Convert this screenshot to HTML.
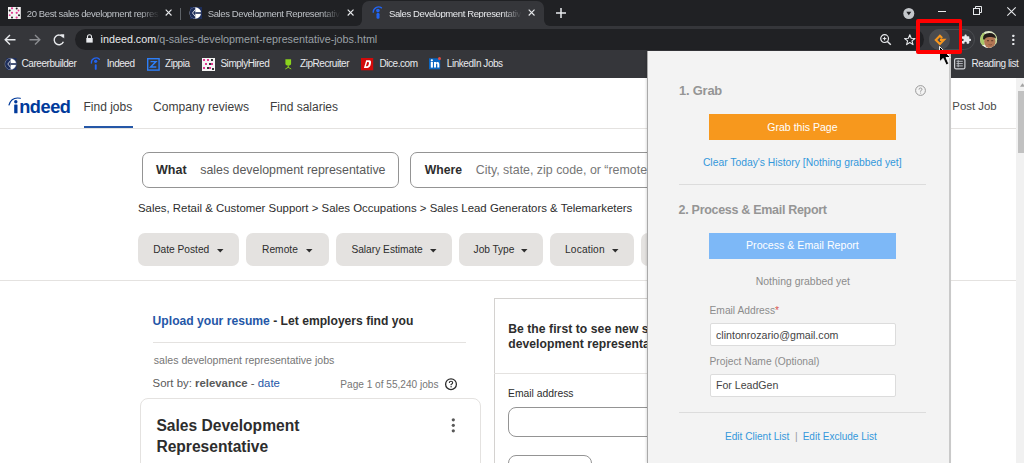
<!DOCTYPE html>
<html><head><meta charset="utf-8"><style>
html,body{margin:0;padding:0;width:1024px;height:463px;overflow:hidden;background:#fff;}
body{position:relative;font-family:"Liberation Sans",sans-serif;}
.t{position:absolute;white-space:nowrap;line-height:1;}
.r{position:absolute;box-sizing:border-box;}
svg{position:absolute;overflow:visible;}
</style></head><body>
<div class="r" style="left:0px;top:78px;width:1024px;height:385px;background:#ffffff;"></div>
<svg style="left:0px;top:90px" width="80" height="30"><path d="M9 15Q11.5 6.6 20.3 8.3" fill="none" stroke="#003a9b" stroke-width="1.15" stroke-linecap="round"/><circle cx="15.8" cy="11.7" r="1.7" fill="#003a9b"/><rect x="14.2" y="14.5" width="3.3" height="8.7" rx="0.5" fill="#003a9b"/></svg>
<div class="t" style="left:19.20px;top:97.79px;font-size:18.2px;color:#003a9b;font-weight:bold;letter-spacing:-0.45px;">ndeed</div>
<div class="t" style="left:83.50px;top:100.74px;font-size:12px;color:#3d3d3d;">Find jobs</div>
<div class="t" style="left:153.00px;top:100.67px;font-size:12.08px;color:#3d3d3d;">Company reviews</div>
<div class="t" style="left:270.00px;top:100.74px;font-size:12px;color:#3d3d3d;">Find salaries</div>
<div class="t" style="left:952.30px;top:100.95px;font-size:11.4px;color:#4a4a4a;">Post Job</div>
<div class="r" style="left:83.5px;top:126px;width:49.4px;height:2px;background:#2557a7;"></div>
<div class="r" style="left:0px;top:128px;width:1024px;height:1px;background:#e4e2e0;"></div>
<div class="r" style="left:142px;top:152px;width:257px;height:36px;background:#fff;border:1px solid #949494;border-radius:7px;"></div>
<div class="t" style="left:156.00px;top:163.92px;font-size:12.5px;color:#2d2d2d;font-weight:bold;">What</div>
<div class="t" style="left:200.20px;top:164.00px;font-size:12.4px;color:#595959;">sales development representative</div>
<div class="r" style="left:410px;top:152px;width:300px;height:36px;background:#fff;border:1px solid #949494;border-radius:7px;"></div>
<div class="t" style="left:424.70px;top:164.17px;font-size:12.2px;color:#2d2d2d;font-weight:bold;">Where</div>
<div class="t" style="left:475.80px;top:164.00px;font-size:12.4px;color:#767676;">City, state, zip code, or “remote”</div>
<div class="t" style="left:138.00px;top:203.33px;font-size:11.42px;color:#2d2d2d;">Sales, Retail &amp; Customer Support &gt; Sales Occupations &gt; Sales Lead Generators &amp; Telemarketers</div>
<div class="r" style="left:138px;top:233px;width:101px;height:33px;background:#e4e2e0;border-radius:7px;"></div>
<div class="t" style="left:153.20px;top:245.07px;font-size:10.2px;color:#2d2d2d;letter-spacing:0.0px;">Date Posted</div>
<svg style="left:217px;top:248.5px" width="7" height="4"><path d="M0 0H6.5L3.25 3.6Z" fill="#2d2d2d"/></svg>
<div class="r" style="left:246px;top:233px;width:83px;height:33px;background:#e4e2e0;border-radius:7px;"></div>
<div class="t" style="left:262.00px;top:245.07px;font-size:10.2px;color:#2d2d2d;letter-spacing:0.05px;">Remote</div>
<svg style="left:305.6px;top:248.5px" width="7" height="4"><path d="M0 0H6.5L3.25 3.6Z" fill="#2d2d2d"/></svg>
<div class="r" style="left:336.3px;top:233px;width:115.30000000000001px;height:33px;background:#e4e2e0;border-radius:7px;"></div>
<div class="t" style="left:351.40px;top:245.07px;font-size:10.2px;color:#2d2d2d;letter-spacing:0.0px;">Salary Estimate</div>
<svg style="left:429.7px;top:248.5px" width="7" height="4"><path d="M0 0H6.5L3.25 3.6Z" fill="#2d2d2d"/></svg>
<div class="r" style="left:459px;top:233px;width:84px;height:33px;background:#e4e2e0;border-radius:7px;"></div>
<div class="t" style="left:473.60px;top:245.07px;font-size:10.2px;color:#2d2d2d;letter-spacing:-0.05px;">Job Type</div>
<svg style="left:520.5px;top:248.5px" width="7" height="4"><path d="M0 0H6.5L3.25 3.6Z" fill="#2d2d2d"/></svg>
<div class="r" style="left:549.7px;top:233px;width:83.89999999999998px;height:33px;background:#e4e2e0;border-radius:7px;"></div>
<div class="t" style="left:565.00px;top:245.07px;font-size:10.2px;color:#2d2d2d;letter-spacing:0.15px;">Location</div>
<svg style="left:612px;top:248.5px" width="7" height="4"><path d="M0 0H6.5L3.25 3.6Z" fill="#2d2d2d"/></svg>
<div class="r" style="left:641px;top:233px;width:99px;height:33px;background:#e4e2e0;border-radius:7px;"></div>
<div class="t" style="left:656.00px;top:245.07px;font-size:10.2px;color:#2d2d2d;letter-spacing:0px;">Company</div>
<svg style="left:700px;top:248.5px" width="7" height="4"><path d="M0 0H6.5L3.25 3.6Z" fill="#2d2d2d"/></svg>
<div class="r" style="left:0px;top:280px;width:1024px;height:1px;background:#e4e2e0;"></div>
<div class="t" style="left:152.60px;top:314.73px;font-size:12.13px;color:#2d2d2d;font-weight:bold;"><span style="color:#2557a7">Upload your resume</span> - Let employers find you</div>
<div class="r" style="left:152.6px;top:342px;width:313px;height:1px;background:#e4e2e0;"></div>
<div class="t" style="left:153.80px;top:354.64px;font-size:10.58px;color:#767676;">sales development representative jobs</div>
<div class="t" style="left:152.60px;top:378.35px;font-size:11.4px;color:#595959;">Sort by: <b>relevance</b> - <span style="color:#2557a7">date</span></div>
<div class="t" style="left:340.30px;top:379.74px;font-size:10.11px;color:#767676;">Page 1 of 55,240 jobs</div>
<svg style="left:444.5px;top:377.5px" width="13" height="13"><circle cx="6" cy="6.2" r="5.4" fill="none" stroke="#2d2d2d" stroke-width="1.3"/><path d="M4.3 5Q4.3 3.2 6 3.2Q7.7 3.2 7.7 4.8Q7.7 5.8 6.1 6.4V7.2" fill="none" stroke="#2d2d2d" stroke-width="1.1"/><circle cx="6.1" cy="8.8" r="0.7" fill="#2d2d2d"/></svg>
<div class="r" style="left:139.5px;top:398px;width:341.5px;height:80px;background:#fff;border:1px solid #e4e2e0;border-radius:8px;"></div>
<div class="t" style="left:156.40px;top:418.29px;font-size:15.6px;color:#2d2d2d;font-weight:bold;">Sales Development</div>
<div class="t" style="left:156.40px;top:438.79px;font-size:15.6px;color:#2d2d2d;font-weight:bold;">Representative</div>
<svg style="left:450.5px;top:418px" width="5" height="15"><circle cx="2.3" cy="1.8" r="1.6" fill="#595959"/><circle cx="2.3" cy="7.3" r="1.6" fill="#595959"/><circle cx="2.3" cy="12.8" r="1.6" fill="#595959"/></svg>
<div class="r" style="left:494px;top:298px;width:300px;height:200px;background:#fff;border:1px solid #d4d2d0;"></div>
<div class="t" style="left:508.20px;top:323.12px;font-size:12.15px;color:#2d2d2d;font-weight:bold;letter-spacing:0.06px;">Be the first to see new sales</div>
<div class="t" style="left:508.20px;top:338.02px;font-size:12.15px;color:#2d2d2d;font-weight:bold;letter-spacing:0.06px;">development representative jobs</div>
<div class="r" style="left:494px;top:373px;width:300px;height:1px;background:#e4e2e0;"></div>
<div class="t" style="left:508.00px;top:389.34px;font-size:10.35px;color:#2d2d2d;">Email address</div>
<div class="r" style="left:508px;top:406.5px;width:250px;height:30px;background:#fff;border:1px solid #949494;border-radius:8px;"></div>
<div class="r" style="left:508px;top:454.5px;width:84px;height:30px;background:#fff;border:1px solid #949494;border-radius:8px;"></div>
<div class="r" style="left:1016.3px;top:78px;width:8px;height:385px;background:#f1f1f1;"></div>
<div class="r" style="left:1018px;top:91px;width:6px;height:62px;background:#c1c1c1;"></div>
<svg style="left:1019.8px;top:83px" width="6" height="4"><path d="M0 3.7L2.5 0.3L5 3.7Z" fill="#a3a3a3"/></svg>
<div class="r" style="left:0px;top:0px;width:1024px;height:26px;background:#202124;"></div>
<div class="r" style="left:0px;top:25.5px;width:1024px;height:52.5px;background:#35363a;"></div>
<div class="r" style="left:356px;top:18px;width:194px;height:8px;background:#35363a;"></div>
<div class="r" style="left:0px;top:0px;width:362px;height:25.5px;background:#202124;border-bottom-right-radius:6px;"></div>
<div class="r" style="left:544px;top:0px;width:480px;height:25.5px;background:#202124;border-bottom-left-radius:6px;"></div>
<div class="r" style="left:362px;top:1px;width:182px;height:25px;background:#35363a;border-radius:7px 7px 0 0;"></div>
<div class="r" style="left:75px;top:29px;width:849px;height:21px;background:#202124;border-radius:11px;"></div>
<div class="r" style="left:180px;top:8px;width:1px;height:12px;background:#5f6368;"></div>
<div class="t" style="left:26.80px;top:8.56px;font-size:9.5px;color:#bdc1c6;letter-spacing:-0.38px;width:134px;overflow:hidden;-webkit-mask-image:linear-gradient(90deg,#000 84%,transparent 99%);">20 Best sales development repres</div>
<div class="t" style="left:207.70px;top:8.56px;font-size:9.5px;color:#bdc1c6;letter-spacing:-0.38px;width:134px;overflow:hidden;-webkit-mask-image:linear-gradient(90deg,#000 84%,transparent 99%);">Sales Development Representativ</div>
<div class="t" style="left:389.00px;top:8.56px;font-size:9.5px;color:#e8eaed;letter-spacing:-0.38px;width:134px;overflow:hidden;-webkit-mask-image:linear-gradient(90deg,#000 84%,transparent 99%);">Sales Development Representativ</div>
<svg style="left:8px;top:7px" width="13" height="12"><rect width="12.8" height="12" fill="#f4f4f4"/><g fill="#e0368f"><circle cx="4" cy="1.3" r="1.1"/><circle cx="10.5" cy="3.5" r="0.9"/><circle cx="4" cy="5.8" r="1.1"/><circle cx="8.7" cy="5.8" r="1.1"/><circle cx="1.7" cy="8.2" r="0.9"/><circle cx="8.7" cy="10.6" r="1.1"/></g><g fill="#222"><circle cx="8.7" cy="1.5" r="1"/><circle cx="1.7" cy="3.5" r="1"/><circle cx="11" cy="8.2" r="1"/><circle cx="4" cy="10.4" r="1"/></g></svg>
<svg style="left:189px;top:7px" width="13" height="13"><rect x="1" y="0" width="12" height="12" fill="#1d2d5a"/><circle cx="6.3" cy="6" r="5.8" fill="#fff"/><path d="M6.3 0.2A5.8 5.8 0 0 0 6.3 11.8Z" fill="#1d2d5a"/><rect x="6.3" y="5.2" width="6" height="1.6" fill="#1d2d5a"/><path d="M6.3 2.5L3.5 6L6.3 9.5" fill="none" stroke="#fff" stroke-width="0.8"/></svg>
<svg style="left:372px;top:6px" width="11" height="13"><path d="M1.2 6.3A5.3 5.3 0 0 1 9.5 1.9" fill="none" stroke="#2164f3" stroke-width="1.3" stroke-linecap="round"/><circle cx="5.9" cy="4.6" r="1.8" fill="#2164f3"/><rect x="4.5" y="7.1" width="3" height="5.7" rx="1.2" fill="#2164f3"/></svg>
<svg style="left:165.4px;top:9.3px" width="8" height="8"><path d="M0.7 0.7L6.5 6.5M6.5 0.7L0.7 6.5" stroke="#e8eaed" stroke-width="1.1"/></svg>
<svg style="left:346.9px;top:9.3px" width="8" height="8"><path d="M0.7 0.7L6.5 6.5M6.5 0.7L0.7 6.5" stroke="#e8eaed" stroke-width="1.1"/></svg>
<svg style="left:528.4px;top:9.3px" width="8" height="8"><path d="M0.7 0.7L6.5 6.5M6.5 0.7L0.7 6.5" stroke="#e8eaed" stroke-width="1.1"/></svg>
<svg style="left:556px;top:8px" width="10" height="10"><path d="M5 0V10M0 5H10" stroke="#e8eaed" stroke-width="1.5"/></svg>
<svg style="left:903px;top:8px" width="12" height="12"><circle cx="5.8" cy="5.5" r="5.5" fill="#c4c7cb"/><path d="M3.3 3.8H8.3L5.8 7.3Z" fill="#202124"/></svg>
<div class="r" style="left:938px;top:11px;width:8px;height:1px;background:#e8eaed;"></div>
<svg style="left:973px;top:6px" width="9" height="9"><rect x="0.5" y="2.5" width="6" height="6" fill="none" stroke="#e8eaed"/><path d="M2.5 2.5V0.5H8.5V6.5H6.5" fill="none" stroke="#e8eaed"/></svg>
<svg style="left:1007px;top:6.5px" width="9" height="9"><path d="M0.3 0.3L8.7 8.7M8.7 0.3L0.3 8.7" stroke="#e8eaed" stroke-width="1.1"/></svg>
<svg style="left:4px;top:34px" width="12" height="12"><path d="M11.5 5.7H1.5M6 1L1.2 5.7L6 10.6" fill="none" stroke="#e8eaed" stroke-width="1.4"/></svg>
<svg style="left:28.5px;top:34px" width="12" height="12"><path d="M0.5 5.7H10.5M6 1L10.8 5.7L6 10.6" fill="none" stroke="#8a8c90" stroke-width="1.4"/></svg>
<svg style="left:53px;top:34px" width="12" height="12"><path d="M10 3.2A4.8 4.8 0 1 0 10.4 7.8" fill="none" stroke="#e8eaed" stroke-width="1.4"/><path d="M7 0.3H11.2V4.5Z" fill="#e8eaed"/></svg>
<svg style="left:85.5px;top:34px" width="7" height="9"><path d="M1.5 4V2.8A2 2 0 0 1 5.5 2.8V4" fill="none" stroke="#e8eaed" stroke-width="1.1"/><rect x="0.3" y="4" width="6.4" height="4.6" fill="#e8eaed"/></svg>
<div class="t" style="left:100.60px;top:33.60px;font-size:10.75px;color:#e8eaed;">indeed.com<span style="color:#9aa0a6">/q-sales-development-representative-jobs.html</span></div>
<svg style="left:879.5px;top:34px" width="12" height="12"><circle cx="4.6" cy="4.6" r="3.9" fill="none" stroke="#e8eaed" stroke-width="1.2"/><path d="M7.4 7.4L10.8 10.8" stroke="#e8eaed" stroke-width="1.4"/><path d="M4.6 2.8V6.4M2.8 4.6H6.4" stroke="#e8eaed" stroke-width="1"/></svg>
<svg style="left:903.5px;top:33.5px" width="12" height="12"><path d="M5.8 0.8L7.2 4.3L11 4.5L8 6.9L9 10.6L5.8 8.5L2.6 10.6L3.6 6.9L0.6 4.5L4.4 4.3Z" fill="none" stroke="#e8eaed" stroke-width="1.1" stroke-linejoin="round"/></svg>
<div class="r" style="left:929px;top:29px;width:46px;height:21px;background:transparent;border:1px solid #4a4c50;border-radius:11px;"></div>
<div class="r" style="left:929px;top:28.7px;width:21.4px;height:21px;background:#4a4b4f;border-radius:50%;"></div>
<svg style="left:934px;top:33.6px" width="12" height="12"><path d="M8.2 4.1L5.9 1.8L1.8 5.9L5.9 10L10 5.9H6" fill="none" stroke="#f7961e" stroke-width="2.1" stroke-linejoin="miter"/></svg>
<svg style="left:961.1px;top:34.2px" width="10.5" height="10.5" viewBox="0 0 24 24"><path d="M20.5 11H19V7c0-1.1-.9-2-2-2h-4V3.5C13 2.12 11.88 1 10.5 1S8 2.12 8 3.5V5H4c-1.1 0-1.99.9-1.99 2v3.8H3.5c1.49 0 2.7 1.21 2.7 2.7s-1.21 2.7-2.7 2.7H2V20c0 1.1.9 2 2 2h3.8v-1.5c0-1.490 1.21-2.7 2.7-2.7 1.49 0 2.7 1.21 2.7 2.7V22H17c1.1 0 2-.9 2-2v-4h1.5c1.38 0 2.5-1.12 2.5-2.5S21.88 11 20.5 11z" fill="#e8eaed"/></svg>
<svg style="left:979.5px;top:31px" width="18" height="18"><defs><clipPath id="av"><circle cx="8.6" cy="8.5" r="8.5"/></clipPath></defs><g clip-path="url(#av)"><rect width="18" height="18" fill="#dfe8c8"/><rect x="0" y="2" width="4.5" height="12" fill="#a9c86a"/><rect x="14" y="3" width="4" height="10" fill="#c9dc9a"/><ellipse cx="5" cy="17.5" rx="7" ry="3.5" fill="#f2f2ee"/><ellipse cx="9.8" cy="10.5" rx="5.6" ry="6.8" fill="#b27654"/><path d="M3 8Q2.5 2 9.5 2Q15.5 2 16 7.5Q14 5.5 9.5 6Q5.5 6 4.2 9Z" fill="#231c1a"/><rect x="7" y="9.3" width="2" height="0.9" fill="#4a2e22"/><rect x="11.2" y="9.3" width="2" height="0.9" fill="#4a2e22"/><path d="M8.5 13.5Q10 14.5 12 13.5" fill="none" stroke="#7a4a36" stroke-width="0.7"/></g></svg>
<svg style="left:1011px;top:34px" width="5" height="12"><rect x="1.2" y="0.7" width="2.2" height="2.2" rx="0.6" fill="#e8eaed"/><rect x="1.2" y="4.8" width="2.2" height="2.2" rx="0.6" fill="#e8eaed"/><rect x="1.2" y="8.9" width="2.2" height="2.2" rx="0.6" fill="#e8eaed"/></svg>
<div class="t" style="left:21.60px;top:58.83px;font-size:10px;color:#e8eaed;letter-spacing:-0.45px;">Careerbuilder</div>
<div class="t" style="left:106.70px;top:58.83px;font-size:10px;color:#e8eaed;letter-spacing:-0.45px;">Indeed</div>
<div class="t" style="left:165.00px;top:58.83px;font-size:10px;color:#e8eaed;letter-spacing:-0.45px;">Zippia</div>
<div class="t" style="left:220.40px;top:58.83px;font-size:10px;color:#e8eaed;letter-spacing:-0.45px;">SimplyHired</div>
<div class="t" style="left:300.00px;top:58.83px;font-size:10px;color:#e8eaed;letter-spacing:-0.45px;">ZipRecruiter</div>
<div class="t" style="left:379.50px;top:58.83px;font-size:10px;color:#e8eaed;letter-spacing:-0.45px;">Dice.com</div>
<div class="t" style="left:446.80px;top:58.83px;font-size:10px;color:#e8eaed;letter-spacing:-0.45px;">LinkedIn Jobs</div>
<svg style="left:4px;top:57.5px" width="13" height="13"><rect x="2.5" y="0" width="10" height="12" fill="#1d2d5a"/><circle cx="6.6" cy="6" r="5.6" fill="#fff" stroke="#9aa0b0" stroke-width="0.5"/><path d="M6.6 0.4A5.6 5.6 0 0 0 6.6 11.6Z" fill="#1d2d5a"/><rect x="6.6" y="5.2" width="6" height="1.6" fill="#1d2d5a"/><path d="M6.6 2.5L3.8 6L6.6 9.5" fill="none" stroke="#fff" stroke-width="0.7"/></svg>
<svg style="left:90px;top:56px" width="11" height="15"><path d="M1.4 7.1A4.8 4.8 0 0 1 9.4 3.2" fill="none" stroke="#2164f3" stroke-width="1.3" stroke-linecap="round"/><circle cx="5.7" cy="5.3" r="1.6" fill="#2164f3"/><rect x="4.8" y="8.2" width="1.9" height="5.6" rx="0.9" fill="#2164f3"/></svg>
<svg style="left:147px;top:57.5px" width="13" height="13"><rect x="0.7" y="0.7" width="11.4" height="11.4" fill="none" stroke="#2d7ff9" stroke-width="1.4"/><path d="M3.5 3.6H9L3.6 9H9.3" fill="none" stroke="#2d7ff9" stroke-width="1.4"/></svg>
<svg style="left:202px;top:57.5px" width="13" height="13"><rect width="13" height="13" fill="#f4f4f4"/><g fill="#e0368f"><rect x="1" y="1" width="2" height="2"/><rect x="5" y="1" width="2" height="2"/><rect x="3" y="5" width="2" height="2"/><rect x="9" y="5" width="2" height="2"/><rect x="1" y="9" width="2" height="2"/><rect x="7" y="9" width="2" height="2"/></g><g fill="#333"><rect x="9" y="1" width="2" height="2"/><rect x="7" y="5" width="2" height="2"/><rect x="5" y="9" width="2" height="2"/><rect x="10" y="10" width="2" height="2"/></g></svg>
<svg style="left:285px;top:58.5px" width="7" height="11"><path d="M0.4 0.2H6.1V4.5Q6.1 6.5 3.25 6.5Q0.4 6.5 0.4 4.5Z" fill="#8bd41d"/><rect x="2.7" y="6.3" width="1.1" height="2.5" fill="#8bd41d"/><path d="M0.3 10L3.25 8.3L6.2 10" fill="none" stroke="#8bd41d" stroke-width="1"/></svg>
<svg style="left:361px;top:57.5px" width="12.5" height="12.5"><rect width="12.2" height="12.3" fill="#d10a0a"/><path d="M5.2 2.2H8.4Q10.6 2.4 9.9 5.6Q9.2 9.9 6.4 10H2.9Z M6.2 4L4.9 8.2H6.2Q7.5 8.1 7.9 5.8Q8.2 4 7.2 4Z" fill="#fff" fill-rule="evenodd"/></svg>
<svg style="left:429px;top:57px" width="13" height="13"><rect x="0" y="1.3" width="11.2" height="11" fill="#0a66c2"/><rect x="1.8" y="5" width="2.1" height="5.6" fill="#fff"/><circle cx="2.85" cy="3.3" r="1.15" fill="#fff"/><path d="M5 10.6V5H7V5.8Q7.7 4.8 8.9 4.9Q10.3 5.1 10.3 7V10.6H8.3V7.5Q8.3 6.5 7.6 6.5Q7 6.5 7 7.5V10.6Z" fill="#fff"/><circle cx="10.5" cy="1.6" r="1.5" fill="#e64a3b"/></svg>
<div class="r" style="left:950px;top:52px;width:74px;height:26px;background:#35363a;"></div>
<svg style="left:954px;top:58px" width="12" height="12"><rect x="0.6" y="0.6" width="10.3" height="10.3" rx="1.5" fill="none" stroke="#d0d2d6" stroke-width="1.2"/><path d="M2.5 3.3H8.8M2.5 5.6H8.8M2.5 7.9H8.8M4.2 2.2V9.2" stroke="#b5b8bd" stroke-width="1"/></svg>
<div class="t" style="left:971.60px;top:58.73px;font-size:10px;color:#e8eaed;letter-spacing:-0.45px;">Reading list</div>
<div class="r" style="left:647px;top:51px;width:304px;height:412px;background:#f3f3f3;border-left:1px solid #a9a9a9;border-right:2px solid #c9c9c9;box-shadow:-1px 0 2px rgba(0,0,0,0.12);"></div>
<div class="t" style="left:679.00px;top:84.88px;font-size:12.9px;color:#959595;font-weight:bold;letter-spacing:-0.2px;">1. Grab</div>
<svg style="left:915.3px;top:84.6px" width="12" height="12"><circle cx="5.5" cy="5.5" r="4.9" fill="none" stroke="#999" stroke-width="1"/><path d="M4 4.6Q4 3 5.5 3Q7 3 7 4.3Q7 5.3 5.6 5.8V6.6" fill="none" stroke="#999" stroke-width="1"/><circle cx="5.6" cy="8" r="0.6" fill="#999"/></svg>
<div class="r" style="left:709px;top:114px;width:187px;height:26px;background:#f7981d;"></div>
<div class="t" style="left:767.30px;top:121.58px;font-size:10.54px;color:#ffffff;">Grab this Page</div>
<div class="t" style="left:702.90px;top:157.55px;font-size:10.34px;color:#3498db;">Clear Today's History [Nothing grabbed yet]</div>
<div class="r" style="left:679px;top:184px;width:247px;height:1px;background:#dcdcdc;"></div>
<div class="t" style="left:678.60px;top:204.02px;font-size:12.5px;color:#959595;font-weight:bold;letter-spacing:-0.3px;">2. Process &amp; Email Report</div>
<div class="r" style="left:709px;top:232.5px;width:187px;height:26.5px;background:#7db8f7;"></div>
<div class="t" style="left:746.00px;top:240.39px;font-size:10.64px;color:#ffffff;">Process &amp; Email Report</div>
<div class="t" style="left:755.70px;top:276.64px;font-size:10.47px;color:#8c8c8c;">Nothing grabbed yet</div>
<div class="t" style="left:709.50px;top:305.82px;font-size:10.25px;color:#8c8c8c;">Email Address<span style="color:#d9534f">*</span></div>
<div class="r" style="left:709.5px;top:323px;width:186.5px;height:23px;background:#fff;border:1px solid #dcdcdc;border-radius:2px;"></div>
<div class="t" style="left:716.00px;top:330.00px;font-size:10.63px;color:#444;">clintonrozario@gmail.com</div>
<div class="t" style="left:709.50px;top:357.32px;font-size:10.25px;color:#8c8c8c;">Project Name (Optional)</div>
<div class="r" style="left:709.5px;top:373.5px;width:186.5px;height:23px;background:#fff;border:1px solid #dcdcdc;border-radius:2px;"></div>
<div class="t" style="left:716.00px;top:380.34px;font-size:10.59px;color:#444;">For LeadGen</div>
<div class="r" style="left:679px;top:412px;width:247px;height:1px;background:#dcdcdc;"></div>
<div class="t" style="left:725.00px;top:431.86px;font-size:10.09px;color:#3498db;">Edit Client List</div>
<div class="t" style="left:795.00px;top:431.86px;font-size:10.09px;color:#999;">|</div>
<div class="t" style="left:802.70px;top:431.91px;font-size:10.03px;color:#3498db;">Edit Exclude List</div>
<svg style="left:938.5px;top:45.7px" width="13" height="21"><path d="M0.5 0.5V15.8L4.2 12.4L7.2 18.9L9.8 17.8L7 11.5H11.6Z" fill="#000" stroke="#fff" stroke-width="0.9" stroke-linejoin="round"/></svg>
<div class="r" style="left:916.3px;top:19.2px;width:45.7px;height:35.2px;background:transparent;border:4px solid #ff0000;border-right-width:3.8px;border-radius:2px;"></div>
</body></html>
